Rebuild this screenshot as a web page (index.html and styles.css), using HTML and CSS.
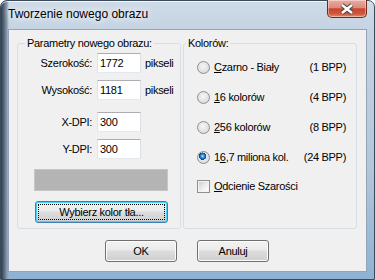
FILE: index.html
```html
<!DOCTYPE html>
<html lang="pl">
<head>
  <meta charset="UTF-8" />
  <title>Tworzenie nowego obrazu</title>
  <link rel="stylesheet" href="styles.css">
</head>
<body>
  <div class="window">
    <div class="titlebar">
      <span class="title">Tworzenie nowego obrazu</span>
      <div class="close">
        <svg width="16" height="12" viewBox="0 0 16 12">
          <path d="M3 2 L13 10 M13 2 L3 10" stroke="#444" stroke-width="4.6" fill="none" />
          <path d="M3 2 L13 10 M13 2 L3 10" stroke="#fff" stroke-width="2.6" fill="none" />
        </svg>
      </div>
    </div>

    <div class="client">
      <div class="groups">
        <fieldset class="group params">
          <legend>Parametry nowego obrazu:</legend>
          <div class="fields">
            <label>Szerokość:</label>
            <div class="edit">1772</div>
            <span class="unit">pikseli</span>
            <label>Wysokość:</label>
            <div class="edit">1181</div>
            <span class="unit">pikseli</span>
          </div>
          <div class="fields dpi">
            <label>X-DPI:</label>
            <div class="edit">300</div>
            <span></span>
            <label>Y-DPI:</label>
            <div class="edit">300</div>
            <span></span>
          </div>
          <div class="swatch"></div>
          <button class="btn focused pick"><span>Wybierz kolor tła...</span></button>
        </fieldset>

        <fieldset class="group colors">
          <legend>Kolorów:</legend>
          <div class="option"><span class="radio"></span><span class="name"><u>C</u>zarno - Biały</span><span class="bpp">(1 BPP)</span></div>
          <div class="option"><span class="radio"></span><span class="name"><u>1</u>6 kolorów</span><span class="bpp">(4 BPP)</span></div>
          <div class="option"><span class="radio"></span><span class="name"><u>2</u>56 kolorów</span><span class="bpp">(8 BPP)</span></div>
          <div class="option"><span class="radio checked"></span><span class="name">1<u>6</u>,7 miliona kol.</span><span class="bpp">(24 BPP)</span></div>
          <div class="option check-row"><span class="checkbox"></span><span class="name"><u>O</u>dcienie Szarości</span></div>
        </fieldset>
      </div>

      <div class="actions">
        <button class="btn">OK</button>
        <button class="btn">Anuluj</button>
      </div>
    </div>
  </div>
</body>
</html>
```

FILE: styles.css
```css
body {
  margin: 0;
  font-family: "Liberation Sans", Arial, sans-serif;
  font-size: 11px;
  letter-spacing: -0.3px;
  color: #000;
}
.window {
  width: 375px;
  height: 280px;
  box-sizing: border-box;
  border: 1px solid #3b4b5b;
  border-radius: 7px 7px 0 0;
  padding: 0 7px 7px;
  display: flex;
  flex-direction: column;
  background:
    linear-gradient(to right, #2f3e4d 0, #56687b 3px, #8a9cb0 6px, rgba(138, 156, 176, 0) 8px),
    linear-gradient(#cfdbe7 0, #c5d4e3 28px, #b3c6da 60%, #8fb2d3 100%);
  box-shadow: inset 0 1px 0 rgba(255, 255, 255, 0.7);
}
.titlebar {
  height: 28px;
  display: flex;
  justify-content: space-between;
  align-items: flex-start;
}
.title {
  margin-top: 6px;
  font-size: 12px;
  line-height: 14px;
  letter-spacing: 0;
  text-shadow: 0 0 6px #fff, 0 0 10px rgba(255, 255, 255, 0.8);
}
.close {
  width: 40px;
  height: 18px;
  margin-top: -1px;
  box-sizing: border-box;
  border: 1px solid #6d2a21;
  border-top: none;
  border-radius: 0 0 5px 5px;
  background: linear-gradient(#eaada2 0, #dc8a7b 45%, #c7462f 52%, #cf553c 80%, #e48c6c 100%);
  box-shadow: inset 0 0 0 1px rgba(255, 255, 255, 0.4);
  display: flex;
  align-items: center;
  justify-content: center;
}
.client {
  flex: 1;
  border: 1px solid #93a4b6;
  background: #f0f0f0;
  padding: 7px 9px 0 8px;
}
.groups {
  display: flex;
  gap: 2px;
}
.group {
  margin: 0;
  padding: 0;
  height: 192px;
  box-sizing: border-box;
  border: 1px solid #d5dfe5;
  border-radius: 3px;
}
.group legend {
  padding: 0 2px;
  line-height: 13px;
}
.params {
  width: 164px;
}
.params legend {
  margin-left: 7px;
}
.colors {
  width: 174px;
}
.colors legend {
  margin-left: 2px;
}
.fields {
  display: grid;
  grid-template-columns: 75px 44px auto;
  grid-auto-rows: 20px;
  column-gap: 4px;
  row-gap: 7px;
  margin-top: 3px;
  align-items: center;
}
.fields.dpi {
  margin-top: 12px;
}
.fields label {
  text-align: right;
  padding-right: 1px;
}
.edit {
  height: 20px;
  box-sizing: border-box;
  border: 1px solid;
  border-color: #abadb3 #dbdfe6 #e3e9ef #e2e3ea;
  background: #fff;
  padding-left: 2px;
  line-height: 18px;
}
.swatch {
  width: 134px;
  height: 22px;
  box-sizing: border-box;
  margin: 10px 0 0 16px;
  background: #b4b4b4;
  border: 1px solid #c6c6c6;
}
.btn {
  font: inherit;
  letter-spacing: inherit;
  color: #000;
  width: 72px;
  height: 22px;
  padding: 0;
  border: 1px solid #707070;
  border-radius: 3px;
  background: linear-gradient(#f2f2f2 0, #ebebeb 45%, #dddddd 50%, #cfcfcf 100%);
  box-shadow: inset 0 0 0 1px #fcfcfc;
}
.btn.focused {
  border-color: #3c7fb1;
  box-shadow: inset 0 0 0 1px #48d2f8;
}
.btn.focused span {
  display: block;
  margin: 2px;
  border: 1px dotted #000;
  line-height: 14px;
}
.pick {
  display: block;
  width: 133px;
  margin: 10px 0 0 17px;
}
.option {
  display: flex;
  align-items: center;
  height: 30px;
  padding: 0 10px 0 13px;
}
.option:first-of-type {
  margin-top: 2px;
}
.check-row {
  height: 28px;
}
.radio,
.checkbox {
  flex: none;
  width: 13px;
  height: 13px;
  box-sizing: border-box;
  margin-right: 4px;
  border: 1px solid #8e8f8f;
}
.radio {
  border-radius: 50%;
  background: radial-gradient(circle at 45% 40%, #f6f6f6 0, #e6e6e6 45%, #cfcfcf 100%);
}
.radio.checked {
  background:
    radial-gradient(circle at 42% 38%, #bfe8ff 0, #3a9be0 1.5px, #0d5aa7 3px, #0a3f7a 3.6px, rgba(0, 0, 0, 0) 3.8px),
    radial-gradient(circle at 45% 40%, #f6f6f6 0, #e6e6e6 45%, #cfcfcf 100%);
}
.checkbox {
  background: linear-gradient(135deg, #cbcbcb 0, #f2f2f2 60%, #ffffff 100%);
  box-shadow: inset 0 0 0 1px #f4f4f4;
}
.name {
  flex: 1;
}
.actions {
  display: flex;
  justify-content: center;
  gap: 20px;
  margin-top: 11px;
}
```
